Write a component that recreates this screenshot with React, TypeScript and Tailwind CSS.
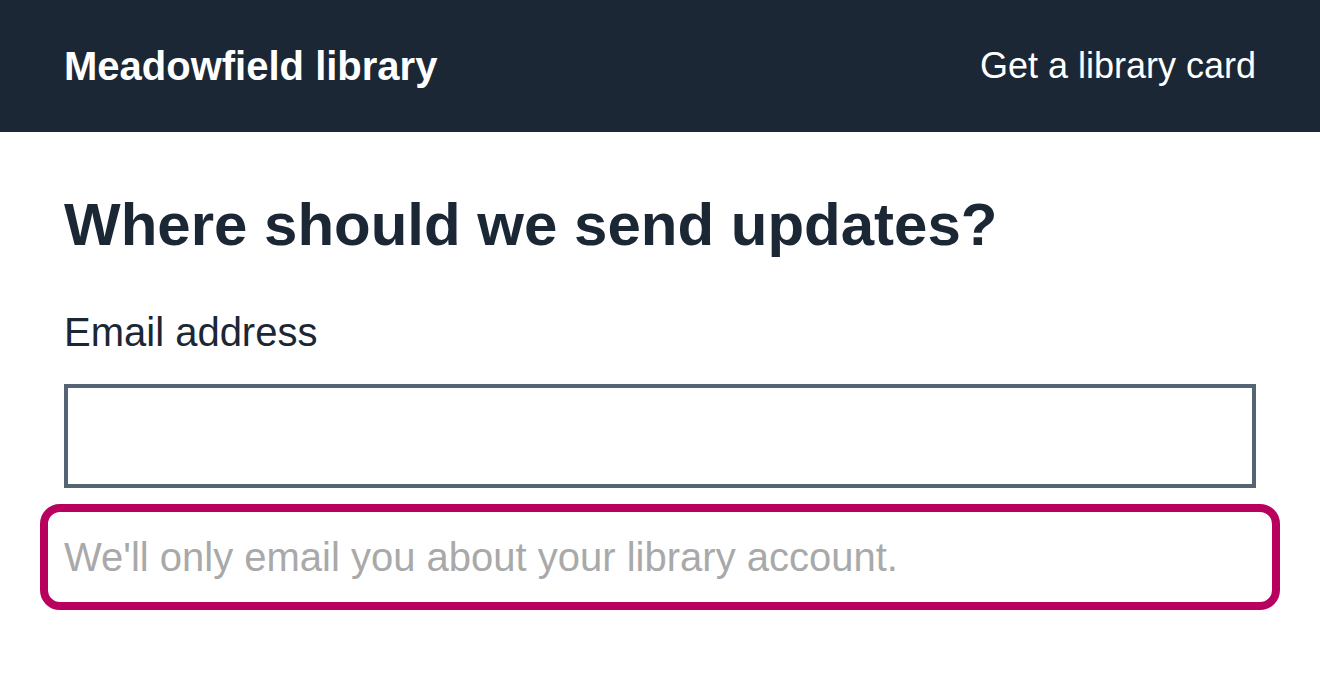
export default function App() {
  return (
    <div className="min-h-[696px] bg-white" style={{ fontFamily: '"Liberation Sans", Arial, sans-serif' }}>
      <header className="flex h-[132px] items-center justify-between bg-[#1b2735] px-16 text-white">
        <span className="text-[40px] font-bold leading-[48px]">Meadowfield library</span>
        <a href="#" className="text-[36px] leading-[44px] text-white">Get a library card</a>
      </header>
      <main className="px-16 pt-[57px]">
        <h1 className="text-[60px] font-bold leading-[72px] text-[#1b2735]">Where should we send updates?</h1>
        <label htmlFor="email" className="mt-[47px] block text-[40px] leading-[48px] text-[#1b2735]">Email address</label>
        <input id="email" type="email" className="mt-[28px] block h-[104px] w-full border-4 border-[#556474] bg-white outline-none" />
        <div className="-mx-6 mt-4 rounded-[20px] border-8 border-[#b8005f] px-4 py-[21px]">
          <p className="text-[40px] leading-[48px] text-[#a9a9a9]">We'll only email you about your library account.</p>
        </div>
      </main>
    </div>
  );
}
